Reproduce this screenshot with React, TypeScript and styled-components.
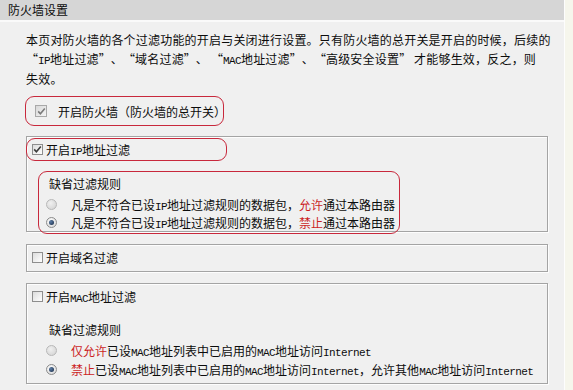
import * as React from 'react';
import styled, { createGlobalStyle } from 'styled-components';

const GlobalStyle = createGlobalStyle`
  html, body {
    margin: 0;
    padding: 0;
  }
  body {
    background: #f7f7f0;
    font-family: "Noto Sans CJK SC", "Liberation Sans", sans-serif;
    font-size: 12px;
    color: #0c0c0c;
  }
`;

const Page = styled.div`
  display: flex;
  width: 573px;
  height: 390px;
  overflow: hidden;
`;

const Main = styled.div`
  width: 564px;
  display: flex;
  flex-direction: column;
  border-right: 1px solid #fdfdfd;
`;

const Strip = styled.div`
  flex: 1;
  background: #f6f6ec;
`;

const Header = styled.div`
  height: 20px;
  line-height: 20px;
  padding-left: 8px;
  background: #d6d6d6;
  border-bottom: 2px solid #fafafa;
`;

const Content = styled.div`
  flex: 1;
  background: #f0f0f0;
  padding: 9px 16px 0 26px;
`;

const Intro = styled.p`
  margin: 0;
  line-height: 18.5px;
  letter-spacing: 0.2px;
  white-space: nowrap;
`;

const Mono = styled.span`
  font-family: "Liberation Mono", "DejaVu Sans Mono", monospace;
  font-size: 11px;
  letter-spacing: -0.6px;
`;

const Quote = styled.span<{ $open?: boolean }>`
  display: inline-block;
  width: 12px;
  text-align: ${p => (p.$open ? 'right' : 'left')};
`;

const Red = styled.span`
  color: #cc1f1f;
`;

const Highlight = styled.div<{ $t: number; $r: number; $b: number; $l: number; $mt?: number; $ml?: number }>`
  position: relative;
  width: fit-content;
  margin-top: ${p => p.$mt ?? 0}px;
  margin-left: ${p => p.$ml ?? 0}px;
  &::after {
    content: '';
    position: absolute;
    top: ${p => -p.$t}px;
    right: ${p => -p.$r}px;
    bottom: ${p => -p.$b}px;
    left: ${p => -p.$l}px;
    border: 1.5px solid #c8283c;
    border-radius: 9px;
    pointer-events: none;
  }
`;

const Panel = styled.div<{ $mt: number; $pb: number }>`
  margin-top: ${p => p.$mt}px;
  border: 1px solid #a4a4a4;
  box-shadow: inset 1px 1px 0 #fdfdfd, 1px 1px 0 #fdfdfd;
  padding: 4px 5px ${p => p.$pb}px;
`;

const CheckRow = styled.label<{ $gap: number }>`
  display: flex;
  align-items: center;
  height: 17px;
  gap: ${p => p.$gap}px;
  white-space: nowrap;
`;

const Box = styled.span<{ $size: number; $faded?: boolean }>`
  display: flex;
  align-items: center;
  justify-content: center;
  flex: none;
  box-sizing: border-box;
  width: ${p => p.$size}px;
  height: ${p => p.$size}px;
  border: 1px solid ${p => (p.$faded ? '#a8a8a8' : '#8e8e8e')};
  background: ${p =>
    p.$faded
      ? 'linear-gradient(135deg, #d8d8d8, #f4f4f4)'
      : 'linear-gradient(135deg, #dcdcdc, #ffffff)'};
`;

const Rules = styled.div<{ $mt: number }>`
  margin: ${p => p.$mt}px 0 0 14px;
  width: fit-content;
`;

const RulesTitle = styled.div`
  padding-left: 3px;
  line-height: 18px;
  margin-bottom: 2px;
`;

const RadioRow = styled.label<{ $h: number }>`
  display: flex;
  align-items: center;
  gap: 14px;
  height: ${p => p.$h}px;
  white-space: nowrap;
`;

const Radio = styled.span<{ $on?: boolean }>`
  display: flex;
  align-items: center;
  justify-content: center;
  flex: none;
  box-sizing: border-box;
  width: 11px;
  height: 11px;
  border-radius: 50%;
  border: 1px solid ${p => (p.$on ? '#8c8c8c' : '#b8b8b8')};
  background: ${p =>
    p.$on
      ? 'radial-gradient(circle at 40% 35%, #ffffff, #d2d2d2)'
      : 'radial-gradient(circle at 40% 35%, #f0f0f0, #d0d0d0)'};
`;

const Dot = styled.span`
  width: 5px;
  height: 5px;
  border-radius: 50%;
  background: radial-gradient(circle at 35% 35%, #5d7ea8, #14263f);
`;

const Check = ({ color }: { color: string }) => (
  <svg width="9" height="9" viewBox="0 0 9 9">
    <polyline points="1.2,4.4 3.4,6.8 7.8,1.6" fill="none" stroke={color} strokeWidth="1.6" />
  </svg>
);

type Option = { on?: boolean; text: React.ReactNode };

const RuleGroup = ({ rowH, options }: { rowH: number; options: Option[] }) => (
  <>
    <RulesTitle>缺省过滤规则</RulesTitle>
    {options.map((o, i) => (
      <RadioRow key={i} $h={rowH}>
        <Radio $on={o.on}>{o.on && <Dot />}</Radio>
        <span>{o.text}</span>
      </RadioRow>
    ))}
  </>
);

const App = () => (
  <>
    <GlobalStyle />
    <Page>
      <Main>
        <Header>防火墙设置</Header>
        <Content>
          <Intro>
            本页对防火墙的各个过滤功能的开启与关闭进行设置。只有防火墙的总开关是开启的时候，后续的
            <br />
            <Quote $open>“</Quote>
            <Mono>IP</Mono>地址过滤<Quote>”</Quote>、<Quote $open>“</Quote>域名过滤<Quote>”</Quote>、 <Quote $open>“</Quote>
            <Mono>MAC</Mono>地址过滤<Quote>”</Quote>、<Quote $open>“</Quote>高级安全设置<Quote>”</Quote> 才能够生效，反之，则
            <br />
            失效。
          </Intro>

          <Highlight $t={6.5} $r={-2} $b={6.5} $l={10} $mt={14} $ml={9}>
            <CheckRow $gap={11}>
              <Box $size={12} $faded>
                <Check color="#7a7a7a" />
              </Box>
              <span>开启防火墙（防火墙的总开关）</span>
            </CheckRow>
          </Highlight>

          <Panel $mt={16.5} $pb={0}>
            <Highlight $t={3} $r={97} $b={3} $l={6}>
              <CheckRow $gap={3}>
                <Box $size={11}>
                  <Check color="#3c3c3c" />
                </Box>
                <span>
                  开启<Mono>IP</Mono>地址过滤
                </span>
              </CheckRow>
            </Highlight>
            <Rules $mt={17}>
              <Highlight $t={4} $r={5} $b={3} $l={8}>
                <RuleGroup
                  rowH={18}
                  options={[
                    {
                      text: (
                        <>
                          凡是不符合已设<Mono>IP</Mono>地址过滤规则的数据包，<Red>允许</Red>通过本路由器
                        </>
                      ),
                    },
                    {
                      on: true,
                      text: (
                        <>
                          凡是不符合已设<Mono>IP</Mono>地址过滤规则的数据包，<Red>禁止</Red>通过本路由器
                        </>
                      ),
                    },
                  ]}
                />
              </Highlight>
            </Rules>
          </Panel>

          <Panel $mt={12} $pb={5}>
            <CheckRow $gap={3}>
              <Box $size={11} />
              <span>开启域名过滤</span>
            </CheckRow>
          </Panel>

          <Panel $mt={11} $pb={4}>
            <CheckRow $gap={3}>
              <Box $size={11} />
              <span>
                开启<Mono>MAC</Mono>地址过滤
              </span>
            </CheckRow>
            <Rules $mt={16}>
              <RuleGroup
                rowH={19}
                options={[
                  {
                    text: (
                      <>
                        <Red>仅允许</Red>已设<Mono>MAC</Mono>地址列表中已启用的<Mono>MAC</Mono>地址访问<Mono>Internet</Mono>
                      </>
                    ),
                  },
                  {
                    on: true,
                    text: (
                      <>
                        <Red>禁止</Red>已设<Mono>MAC</Mono>地址列表中已启用的<Mono>MAC</Mono>地址访问<Mono>Internet</Mono>，允许其他<Mono>MAC</Mono>地址访问<Mono>Internet</Mono>
                      </>
                    ),
                  },
                ]}
              />
            </Rules>
          </Panel>
        </Content>
      </Main>
      <Strip />
    </Page>
  </>
);

export default App;
